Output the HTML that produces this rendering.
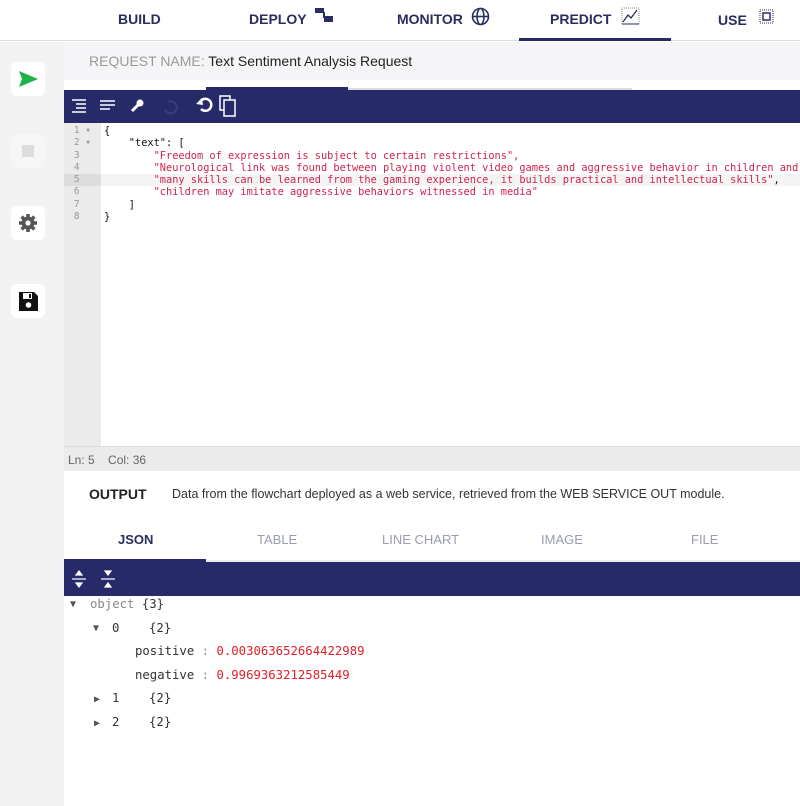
<!DOCTYPE html>
<html><head><style>
*{margin:0;padding:0;box-sizing:border-box}
body{width:800px;height:806px;overflow:hidden;background:#fff;font-family:"Liberation Sans",sans-serif;position:relative}
.abs{position:absolute}
.nav{left:0;top:0;width:800px;height:41px;border-bottom:1px solid #ddd;background:#fff}
.nav span{position:absolute;top:11px;font-weight:bold;font-size:14px;color:#2a2d5e}
.side{left:0;top:42px;width:64px;height:764px;background:#f2f2f2}
.btn{position:absolute;left:11px;width:34px;height:34px;background:#fff;border-radius:6px}
.mono{font-family:"DejaVu Sans Mono","Liberation Mono",monospace}
.code div{height:12.3px;line-height:12.3px;font-size:10.3px;white-space:pre}
.r{color:#d0234f}
.gut div{height:12.3px;line-height:12.3px;font-size:9.5px;color:#999;text-align:right;padding-right:10px}
.tree div{position:absolute;font-size:12.3px;color:#333;white-space:pre}
.red{color:#e0202a}
</style></head><body>
<div class="abs nav">
<span style="left:118px">BUILD</span>
<span style="left:249px">DEPLOY</span>
<svg class="abs" style="left:314px;top:7px" width="20" height="16"><rect x="1" y="1" width="9" height="5" fill="#2a2d5e"/><rect x="9" y="5" width="2" height="6" fill="#2a2d5e"/><rect x="10" y="9" width="9" height="6" fill="#2a2d5e"/></svg>
<span style="left:397px">MONITOR</span>
<svg class="abs" style="left:471px;top:7px" width="19" height="19"><g fill="none" stroke="#2a2d5e" stroke-width="1.6"><circle cx="9.5" cy="9.5" r="8"/><ellipse cx="9.5" cy="9.5" rx="3.5" ry="8"/><line x1="1.5" y1="9.5" x2="17.5" y2="9.5"/></g></svg>
<span style="left:550px">PREDICT</span>
<svg class="abs" style="left:621px;top:7px" width="19" height="18"><rect x="1" y="1" width="17" height="16" fill="none" stroke="#888" stroke-width="1" stroke-dasharray="1 1"/><polyline points="2,15 7,8 10,11 16,3" fill="none" stroke="#2a2d5e" stroke-width="1.3"/><line x1="1" y1="17" x2="18" y2="17" stroke="#2a2d5e"/></svg>
<span style="left:718px;top:12px">USE</span>
<svg class="abs" style="left:759px;top:9px" width="15" height="15"><rect x="1" y="1" width="13" height="13" fill="none" stroke="#2a2d5e" stroke-dasharray="1 1"/><rect x="4" y="4" width="7" height="7" fill="none" stroke="#2a2d5e" stroke-width="1.5"/></svg>
</div>
<div class="abs" style="left:519px;top:38px;width:152px;height:3px;background:#272a69"></div>
<div class="abs side">
<div class="btn" style="top:20px"><svg width="34" height="34"><polygon points="8,9 27,17 8,25 11,17" fill="#1fb34a"/></svg></div>
<div class="btn" style="top:92px;background:#f6f6f6"><div class="abs" style="left:11px;top:11px;width:12px;height:12px;background:#ddd"></div></div>
<div class="btn" style="top:164px"><svg width="34" height="34"><g stroke="#555" stroke-width="3.5"><line x1="17" y1="8" x2="17" y2="26"/><line x1="8" y1="17" x2="26" y2="17"/><line x1="10.6" y1="10.6" x2="23.4" y2="23.4"/><line x1="23.4" y1="10.6" x2="10.6" y2="23.4"/></g><circle cx="17" cy="17" r="6.5" fill="#555"/><circle cx="17" cy="17" r="2.6" fill="#fff"/></svg></div>
<div class="btn" style="top:242px"><svg width="34" height="34"><path d="M8 8h15l4 4v15H8z" fill="#111"/><rect x="12" y="9" width="9" height="6" fill="#fff"/><rect x="18" y="10" width="2" height="4" fill="#111"/><circle cx="17.5" cy="21" r="2.8" fill="#fff"/></svg></div>
</div>
<div class="abs" style="left:64px;top:42px;width:736px;height:38px;background:#f5f5f7;font-size:14px;color:#222;padding:11px 0 0 25px"><span style="color:#999">REQUEST NAME:</span> Text Sentiment Analysis Request</div>
<div class="abs" style="left:206px;top:87px;width:142px;height:3px;background:#272a69"></div>
<div class="abs" style="left:348px;top:88px;width:284px;height:2px;background:#ddd"></div>
<div class="abs" style="left:64px;top:90px;width:736px;height:33px;background:#272a69">
<svg width="190" height="33"><g stroke="#fff" stroke-width="1.5" fill="none"><path d="M8 10h14M12 14h10M12 18h10M8 22h14"/><path d="M36 11h15M36 15h15M36 19h10"/><path d="M68 21l7-7" stroke-width="3"/><circle cx="76" cy="13" r="3.5" fill="#fff" stroke="none"/></g><path d="M104 12a6 6 0 1 1 -3 7" stroke="#3a3d78" stroke-width="2" fill="none"/><path d="M137 19a6 6 0 1 0 -1 -7" stroke="#fff" stroke-width="2.5" fill="none"/><polygon points="138,8 139,15 132,14" fill="#fff"/><rect x="156" y="6" width="10" height="14" fill="none" stroke="#fff" stroke-width="1.5"/><rect x="160" y="10" width="11" height="16" fill="#272a69" stroke="#fff" stroke-width="1.5"/></svg>
</div>
<div class="abs" style="left:64px;top:123px;width:37px;height:323px;background:#ebebeb"></div>
<div class="abs gut mono" style="left:64px;top:125px;width:37px">
<div>1 ▾</div><div>2 ▾</div><div>3&nbsp;&nbsp;</div><div>4&nbsp;&nbsp;</div><div style="background:#dcdcdc">5&nbsp;&nbsp;</div><div>6&nbsp;&nbsp;</div><div>7&nbsp;&nbsp;</div><div>8&nbsp;&nbsp;</div></div>
<div class="abs" style="left:101px;top:174px;width:699px;height:12px;background:#f4f4f4"></div>
<div class="abs code mono" style="left:104px;top:125px;color:#111">
<div>{</div><div>    "text": [</div><div class="r">        "Freedom of expression is subject to certain restrictions",</div><div class="r">        "Neurological link was found between playing violent video games and aggressive behavior in children and</div><div class="r">        "many skills can be learned from the gaming experience, it builds practical and intellectual skills"<span style="color:#111">,</span></div><div class="r">        "children may imitate aggressive behaviors witnessed in media"</div><div>    ]</div><div>}</div></div>
<div class="abs" style="left:64px;top:446px;width:736px;height:25px;background:#ebebeb;border-top:1px solid #ddd;font-size:12px;color:#666;padding:6px 0 0 4px">Ln: 5&nbsp;&nbsp;&nbsp;&nbsp;Col: 36</div>
<div class="abs" style="left:89px;top:486px;font-size:14px;font-weight:bold;color:#222">OUTPUT</div>
<div class="abs" style="left:172px;top:487px;font-size:12.5px;color:#333">Data from the flowchart deployed as a web service, retrieved from the WEB SERVICE OUT module.</div>
<div class="abs" style="top:532px;left:118px;font-size:13px;font-weight:bold;color:#2a2d5e">JSON</div>
<div class="abs" style="top:532px;left:257px;font-size:13px;color:#9a9cb0">TABLE</div>
<div class="abs" style="top:532px;left:382px;font-size:13px;color:#9a9cb0">LINE CHART</div>
<div class="abs" style="top:532px;left:541px;font-size:13px;color:#9a9cb0">IMAGE</div>
<div class="abs" style="top:532px;left:691px;font-size:13px;color:#9a9cb0">FILE</div>
<div class="abs" style="left:64px;top:559px;width:142px;height:3px;background:#272a69"></div>
<div class="abs" style="left:206px;top:560px;width:594px;height:2px;background:#eee"></div>
<div class="abs" style="left:64px;top:562px;width:736px;height:34px;background:#272a69">
<svg width="60" height="34"><g stroke="#fff" fill="#fff" stroke-width="1.2"><line x1="8" y1="17" x2="22" y2="17"/><polygon points="15,9 12,13 18,13"/><polygon points="15,25 12,21 18,21"/><line x1="37" y1="17" x2="51" y2="17"/><polygon points="44,13 41,9 47,9"/><polygon points="44,21 41,25 47,25"/></g></svg></div>
<div class="abs tree mono" style="left:64px;top:596px;width:736px;height:210px">
<div style="left:6px;top:3px;font-size:10px;color:#555">▼</div>
<div style="left:26px;top:1px"><span style="color:#888">object</span> {3}</div>
<div style="left:29px;top:27px;font-size:10px;color:#555">▼</div>
<div style="left:48px;top:25px">0    {2}</div>
<div style="left:71px;top:48px">positive <span style="color:#888">:</span> <span class="red">0.003063652664422989</span></div>
<div style="left:71px;top:72px">negative <span style="color:#888">:</span> <span class="red">0.9969363212585449</span></div>
<div style="left:30px;top:98px;font-size:10px;color:#555">▶</div>
<div style="left:48px;top:95px">1    {2}</div>
<div style="left:30px;top:122px;font-size:10px;color:#555">▶</div>
<div style="left:48px;top:119px">2    {2}</div>
</div>
</body></html>
